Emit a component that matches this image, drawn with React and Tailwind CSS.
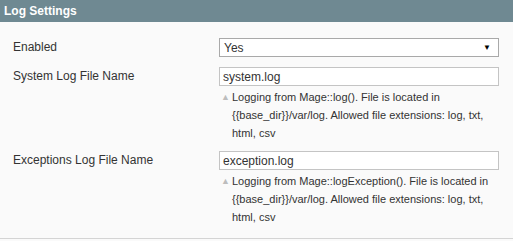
function Hint({ lines }) {
  return (
    <div className="flex mt-[2px] text-[11px] leading-[18px] text-[#333]">
      <span className="w-[13px] shrink-0 pl-[2px] text-[9px] text-[#bdbdbd]">▲</span>
      <div className="flex flex-col">
        {lines.map((l) => (
          <span key={l} className="whitespace-nowrap">
            {l}
          </span>
        ))}
      </div>
    </div>
  );
}

function Row({ label, children }) {
  return (
    <div className="flex">
      <div className="w-[219px] shrink-0 pl-[13px] leading-[19px]">{label}</div>
      <div className="w-[280px]">{children}</div>
    </div>
  );
}

export default function App() {
  return (
    <div
      className="w-[513px] h-[241px] bg-[#fafafa] text-[#333] text-[12px] overflow-hidden"
      style={{ fontFamily: '"Liberation Sans", Arial, sans-serif' }}
    >
      <div className="h-[22px] bg-[#6f8992] text-white font-bold text-[12px] leading-[22px] pl-[4px]">
        Log Settings
      </div>
      <div className="h-[217px] border-b border-[#d4d4d4] pt-[16px] flex flex-col">
        <Row label="Enabled">
          <div className="h-[19px] border border-[#a9a9a9] bg-white flex items-center justify-between pl-[4px] pr-[7px]">
            <span>Yes</span>
            <span className="text-[8px] text-black">▼</span>
          </div>
        </Row>
        <div className="h-[10px]" />
        <Row label="System Log File Name">
          <div className="h-[19px] border border-[#c4c4c4] bg-white flex items-center pl-[3px]">
            system.log
          </div>
          <Hint
            lines={[
              "Logging from Mage::log(). File is located in",
              "{{base_dir}}/var/log. Allowed file extensions: log, txt,",
              "html, csv",
            ]}
          />
        </Row>
        <div className="h-[9px]" />
        <Row label="Exceptions Log File Name">
          <div className="h-[19px] border border-[#c4c4c4] bg-white flex items-center pl-[3px]">
            exception.log
          </div>
          <Hint
            lines={[
              "Logging from Mage::logException(). File is located in",
              "{{base_dir}}/var/log. Allowed file extensions: log, txt,",
              "html, csv",
            ]}
          />
        </Row>
      </div>
    </div>
  );
}
